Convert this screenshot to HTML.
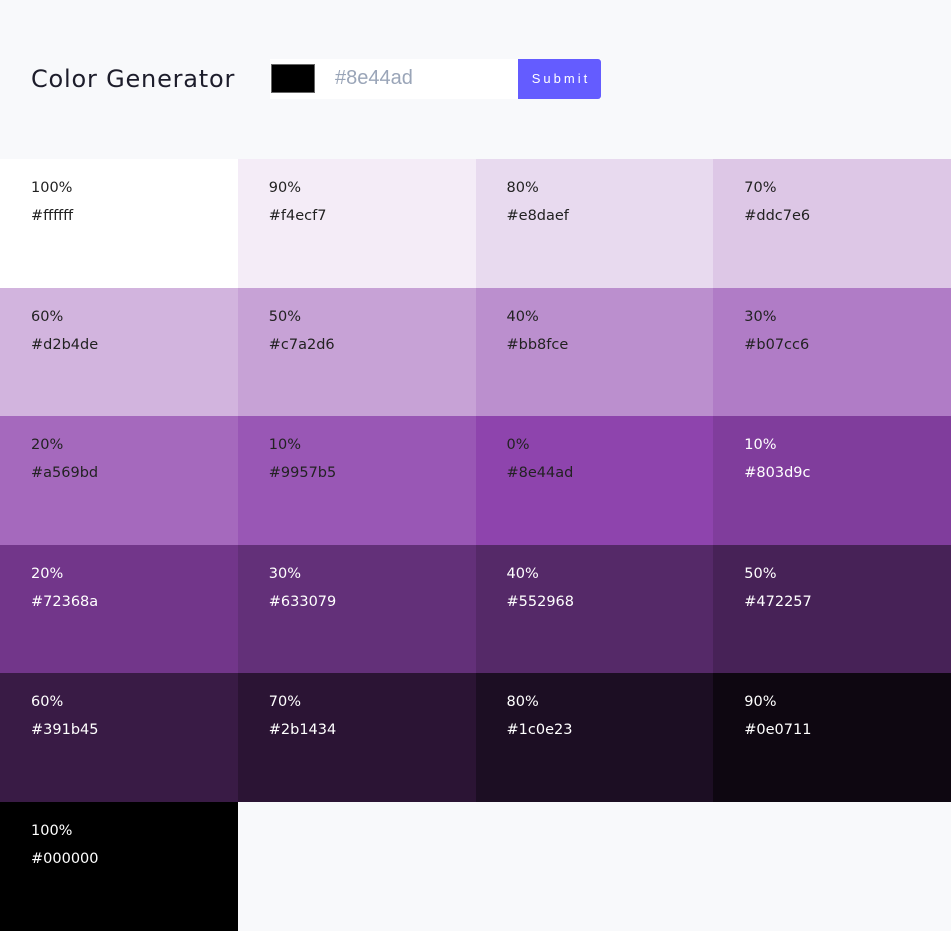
<!DOCTYPE html>
<html><head><meta charset="utf-8"><style>
*{margin:0;padding:0;box-sizing:border-box}
body{width:951px;height:929px;background:#f8f9fb;font-family:"DejaVu Sans","Liberation Sans",sans-serif;overflow:hidden;position:relative}
h1{position:absolute;left:31px;top:63px;font-weight:400;font-size:24px;letter-spacing:0.8px;color:#1d1d2b;line-height:32px}
.form{position:absolute;left:270px;top:59px;width:331px;height:40px;background:#fff}
.sw{position:absolute;left:1px;top:5px;width:44px;height:29px;background:#000;border:1px solid #666}
.ph{position:absolute;left:65px;top:8px;font:20px "Liberation Sans",sans-serif;color:#9aa5b8}
.btn{position:absolute;left:248px;top:0;width:83px;height:40px;background:#645cff;border-radius:0 3px 3px 0;color:#fff;font:13px "Liberation Sans",sans-serif;letter-spacing:3px;text-align:center;line-height:40px;padding-left:3px}
.grid{position:absolute;top:159px;left:0;width:951px;display:grid;grid-template-columns:repeat(4,1fr);grid-auto-rows:128.6px}
.t{padding:15px 31px;font-size:14.5px;line-height:28px;color:#222}
.t.w{color:#fff}
</style></head><body>
<h1>Color Generator</h1>
<div class="form"><div class="sw"></div><div class="ph">#8e44ad</div><div class="btn">Submit</div></div>
<div class="grid">
<div class="t" style="background:#ffffff">100%<br>#ffffff</div>
<div class="t" style="background:#f4ecf7">90%<br>#f4ecf7</div>
<div class="t" style="background:#e8daef">80%<br>#e8daef</div>
<div class="t" style="background:#ddc7e6">70%<br>#ddc7e6</div>
<div class="t" style="background:#d2b4de">60%<br>#d2b4de</div>
<div class="t" style="background:#c7a2d6">50%<br>#c7a2d6</div>
<div class="t" style="background:#bb8fce">40%<br>#bb8fce</div>
<div class="t" style="background:#b07cc6">30%<br>#b07cc6</div>
<div class="t" style="background:#a569bd">20%<br>#a569bd</div>
<div class="t" style="background:#9957b5">10%<br>#9957b5</div>
<div class="t" style="background:#8e44ad">0%<br>#8e44ad</div>
<div class="t w" style="background:#803d9c">10%<br>#803d9c</div>
<div class="t w" style="background:#72368a">20%<br>#72368a</div>
<div class="t w" style="background:#633079">30%<br>#633079</div>
<div class="t w" style="background:#552968">40%<br>#552968</div>
<div class="t w" style="background:#472257">50%<br>#472257</div>
<div class="t w" style="background:#391b45">60%<br>#391b45</div>
<div class="t w" style="background:#2b1434">70%<br>#2b1434</div>
<div class="t w" style="background:#1c0e23">80%<br>#1c0e23</div>
<div class="t w" style="background:#0e0711">90%<br>#0e0711</div>
<div class="t w" style="background:#000000">100%<br>#000000</div>
</div>
</body></html>
